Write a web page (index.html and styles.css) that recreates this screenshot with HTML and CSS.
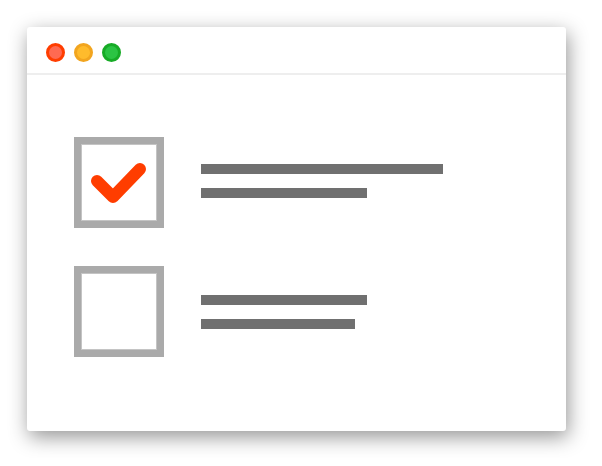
FILE: index.html
```html
<!DOCTYPE html>
<html>
<head>
<meta charset="utf-8">
<link rel="stylesheet" href="styles.css">
</head>
<body>
<div class="window">
  <div class="titlebar">
    <span class="dot red"></span>
    <span class="dot yellow"></span>
    <span class="dot green"></span>
  </div>
  <div class="content">
    <div class="row">
      <div class="checkbox">
        <svg class="check" width="76" height="76" viewBox="0 0 76 76">
          <polyline points="16,37 32,53 59,25" fill="none" stroke="#ff3d00" stroke-width="12" stroke-linecap="round" stroke-linejoin="round"/>
        </svg>
      </div>
      <div class="lines first">
        <div class="bar w242"></div>
        <div class="bar w166"></div>
      </div>
    </div>
    <div class="row">
      <div class="checkbox"></div>
      <div class="lines">
        <div class="bar w166"></div>
        <div class="bar w154"></div>
      </div>
    </div>
  </div>
</div>
</body>
</html>
```
FILE: styles.css
```css
html, body {
  margin: 0;
  padding: 0;
  background: #ffffff;
}
body {
  padding: 27px;
}
.window {
  width: 539px;
  height: 404px;
  background: #ffffff;
  border-radius: 3px;
  box-shadow: 2px 6px 20px rgba(0, 0, 0, 0.42);
  box-sizing: border-box;
}
.titlebar {
  height: 48px;
  border-bottom: 2px solid #eeeeee;
  display: flex;
  align-items: center;
  padding-left: 19px;
  padding-top: 4px;
  box-sizing: border-box;
  gap: 9px;
}
.dot {
  width: 19px;
  height: 19px;
  border-radius: 50%;
  box-sizing: border-box;
  border: 3px solid;
}
.red { background: #ff6a52; border-color: #ff3d00; }
.yellow { background: #ffbb2c; border-color: #f2a51f; }
.green { background: #2bc443; border-color: #17ab26; }
.content {
  padding: 62px 0 0 47px;
  display: flex;
  flex-direction: column;
  gap: 38px;
}
.row {
  display: flex;
  align-items: center;
  gap: 37px;
}
.checkbox {
  width: 90px;
  height: 91px;
  box-sizing: border-box;
  border: 7px solid #aaaaaa;
  box-shadow: inset 0 0 0 1px #c4c4c4;
  position: relative;
}
.check {
  position: absolute;
  left: 0;
  top: 0;
}
.lines {
  display: flex;
  flex-direction: column;
  gap: 14px;
}
.lines.first {
  margin-top: -3px;
}
.bar {
  height: 10px;
  background: #707070;
}
.w242 { width: 242px; }
.w166 { width: 166px; }
.w154 { width: 154px; }
```
